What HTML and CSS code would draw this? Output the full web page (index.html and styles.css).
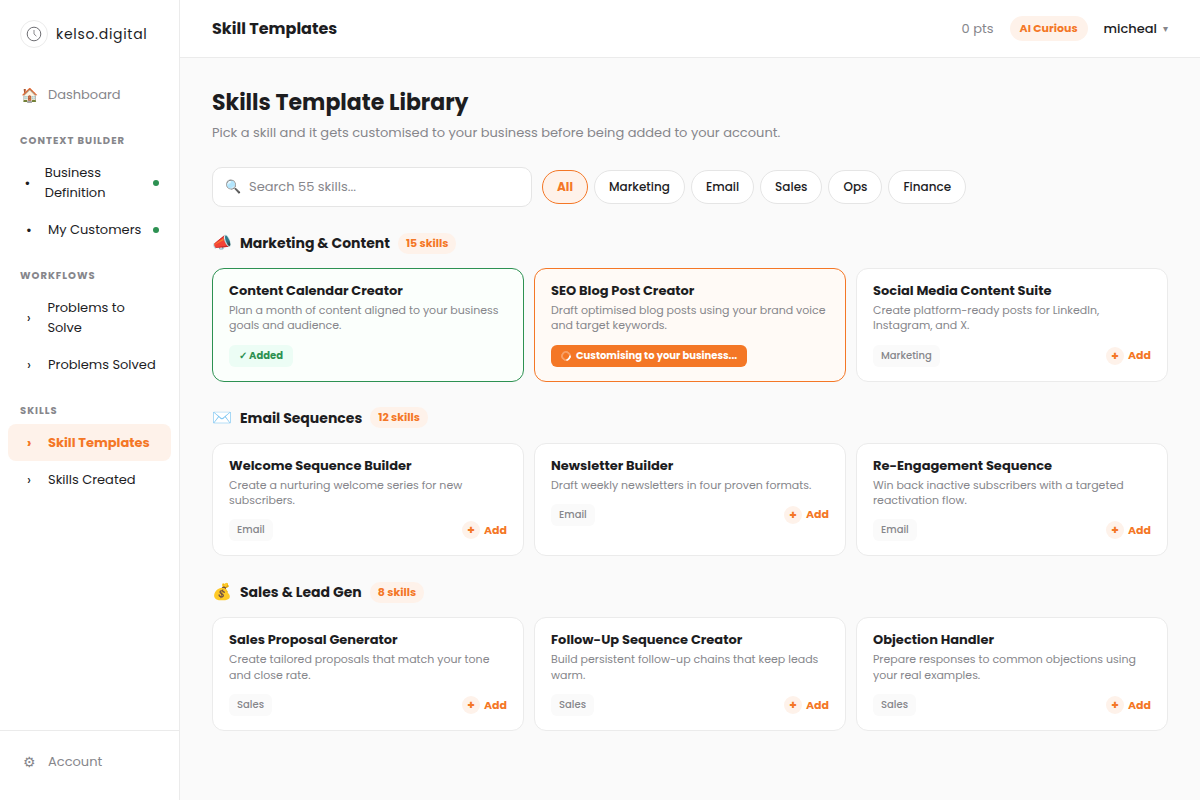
FILE: index.html
```
<!DOCTYPE html>
<html lang="en">
<head>
  <meta charset="UTF-8" />
  <meta name="viewport" content="width=device-width, initial-scale=1.0"/>
  <title>Skill Templates - kelso.digital</title>
  <link rel="stylesheet" href="styles.css">
</head>
<body>
  <aside class="sidebar">
    <a class="logo" href="#">
      <span class="logo-mark">
        <svg width="16" height="16" viewBox="0 0 16 16" fill="none" stroke="#6e6e73" stroke-width="1">
          <circle cx="8" cy="8" r="6.8"/>
          <path d="M8 4v4l2.4 2.2" stroke="#8a8a8e"/>
        </svg>
      </span>
      <span class="logo-text">kelso.digital</span>
    </a>

    <nav class="nav">
      <a class="nav-item muted" href="#"><span class="nav-icon">🏠</span><span>Dashboard</span></a>

      <h2 class="nav-label">Context Builder</h2>
      <a class="nav-item" href="#"><span class="nav-icon">•</span><span>Business Definition</span><span class="dot"></span></a>
      <a class="nav-item" href="#"><span class="nav-icon">•</span><span>My Customers</span><span class="dot"></span></a>

      <h2 class="nav-label">Workflows</h2>
      <a class="nav-item" href="#"><span class="nav-icon">›</span><span>Problems to Solve</span></a>
      <a class="nav-item" href="#"><span class="nav-icon">›</span><span>Problems Solved</span></a>

      <h2 class="nav-label">Skills</h2>
      <a class="nav-item active" href="#"><span class="nav-icon">›</span><span>Skill Templates</span></a>
      <a class="nav-item" href="#"><span class="nav-icon">›</span><span>Skills Created</span></a>
    </nav>

    <div class="sidebar-footer">
      <a class="nav-item muted" href="#"><span class="nav-icon">⚙</span><span>Account</span></a>
    </div>
  </aside>

  <div class="page">
    <header class="topbar">
      <div class="topbar-title">Skill Templates</div>
      <div class="topbar-right">
        <span class="points">0 pts</span>
        <span class="level">AI Curious</span>
        <button class="user" type="button">micheal <span class="caret">▾</span></button>
      </div>
    </header>

    <main class="content">
      <h1>Skills Template Library</h1>
      <p class="subtitle">Pick a skill and it gets customised to your business before being added to your account.</p>

      <div class="toolbar">
        <label class="search">
          <span class="search-icon">🔍</span>
          <input type="text" placeholder="Search 55 skills..." aria-label="Search skills">
        </label>
        <div class="filters">
          <button class="filter active" type="button">All</button>
          <button class="filter" type="button">Marketing</button>
          <button class="filter" type="button">Email</button>
          <button class="filter" type="button">Sales</button>
          <button class="filter" type="button">Ops</button>
          <button class="filter" type="button">Finance</button>
        </div>
      </div>

      <section class="category">
        <div class="category-header">
          <span class="category-icon">📣</span>
          <h2>Marketing &amp; Content</h2>
          <span class="count">15 skills</span>
        </div>
        <div class="cards">
          <article class="card added">
            <h3>Content Calendar Creator</h3>
            <p>Plan a month of content aligned to your business goals and audience.</p>
            <div class="card-footer"><span class="status status-added">✓ Added</span></div>
          </article>
          <article class="card loading">
            <h3>SEO Blog Post Creator</h3>
            <p>Draft optimised blog posts using your brand voice and target keywords.</p>
            <div class="card-footer"><span class="status status-loading"><span class="spinner"></span>Customising to your business...</span></div>
          </article>
          <article class="card">
            <h3>Social Media Content Suite</h3>
            <p>Create platform-ready posts for LinkedIn, Instagram, and X.</p>
            <div class="card-footer"><span class="tag">Marketing</span><button class="add" type="button"><span class="plus">+</span>Add</button></div>
          </article>
        </div>
      </section>

      <section class="category">
        <div class="category-header">
          <span class="category-icon">✉️</span>
          <h2>Email Sequences</h2>
          <span class="count">12 skills</span>
        </div>
        <div class="cards">
          <article class="card">
            <h3>Welcome Sequence Builder</h3>
            <p>Create a nurturing welcome series for new subscribers.</p>
            <div class="card-footer"><span class="tag">Email</span><button class="add" type="button"><span class="plus">+</span>Add</button></div>
          </article>
          <article class="card">
            <h3>Newsletter Builder</h3>
            <p>Draft weekly newsletters in four proven formats.</p>
            <div class="card-footer"><span class="tag">Email</span><button class="add" type="button"><span class="plus">+</span>Add</button></div>
          </article>
          <article class="card">
            <h3>Re-Engagement Sequence</h3>
            <p>Win back inactive subscribers with a targeted reactivation flow.</p>
            <div class="card-footer"><span class="tag">Email</span><button class="add" type="button"><span class="plus">+</span>Add</button></div>
          </article>
        </div>
      </section>

      <section class="category">
        <div class="category-header">
          <span class="category-icon">💰</span>
          <h2>Sales &amp; Lead Gen</h2>
          <span class="count">8 skills</span>
        </div>
        <div class="cards">
          <article class="card">
            <h3>Sales Proposal Generator</h3>
            <p>Create tailored proposals that match your tone and close rate.</p>
            <div class="card-footer"><span class="tag">Sales</span><button class="add" type="button"><span class="plus">+</span>Add</button></div>
          </article>
          <article class="card">
            <h3>Follow-Up Sequence Creator</h3>
            <p>Build persistent follow-up chains that keep leads warm.</p>
            <div class="card-footer"><span class="tag">Sales</span><button class="add" type="button"><span class="plus">+</span>Add</button></div>
          </article>
          <article class="card">
            <h3>Objection Handler</h3>
            <p>Prepare responses to common objections using your real examples.</p>
            <div class="card-footer"><span class="tag">Sales</span><button class="add" type="button"><span class="plus">+</span>Add</button></div>
          </article>
        </div>
      </section>
    </main>
  </div>
</body>
</html>
```
FILE: styles.css
```
:root {
  --orange: #f47726;
  --orange-light: #fef2ea;
  --green: #2d9152;
  --text: #1d1d1f;
  --muted: #86868b;
  --border: #ebebeb;
  --bg: #fafafa;
}

* {
  box-sizing: border-box;
  margin: 0;
  padding: 0;
}

body {
  display: flex;
  min-height: 100vh;
  font-family: Poppins, sans-serif;
  font-size: 13px;
  line-height: 20px;
  background: var(--bg);
  color: var(--text);
}

a {
  color: inherit;
  text-decoration: none;
}

button,
input {
  font-family: inherit;
  color: inherit;
}

button {
  cursor: pointer;
}

/* Sidebar */
.sidebar {
  flex: 0 0 180px;
  display: flex;
  flex-direction: column;
  background: #fff;
  border-right: 1px solid var(--border);
}

.logo {
  display: flex;
  align-items: center;
  gap: 8px;
  padding: 20px;
}

.logo-mark {
  display: flex;
  align-items: center;
  justify-content: center;
  width: 28px;
  height: 28px;
  border: 1px solid var(--border);
  border-radius: 50%;
}

.logo-text {
  font-size: 14px;
  letter-spacing: 0.05em;
}

.nav {
  flex: 1;
  padding: 8px 8px 0;
}

.nav-label {
  padding: 20px 12px 6px;
  font-size: 10px;
  font-weight: 700;
  line-height: 15px;
  letter-spacing: 1px;
  text-transform: uppercase;
  color: var(--muted);
}

.nav-item {
  display: flex;
  align-items: center;
  gap: 10px;
  padding: 9px 12px 8px;
  border-radius: 8px;
}

.nav-item.muted {
  color: var(--muted);
}

.nav-item.active {
  background: var(--orange-light);
  color: var(--orange);
  font-weight: 700;
}

.nav-icon {
  width: 18px;
  font-size: 14px;
  text-align: center;
}

.dot {
  flex-shrink: 0;
  width: 6px;
  height: 6px;
  margin-left: auto;
  border-radius: 50%;
  background: var(--green);
}

.sidebar-footer {
  padding: 12px 8px 20px;
  border-top: 1px solid var(--border);
}

/* Top bar */
.page {
  flex: 1;
  min-width: 0;
}

.topbar {
  display: flex;
  align-items: center;
  justify-content: space-between;
  padding: 16px 32px;
  background: #fff;
  border-bottom: 1px solid var(--border);
}

.topbar-title {
  font-size: 16px;
  font-weight: 700;
  line-height: 25px;
}

.topbar-right {
  display: flex;
  align-items: center;
  gap: 16px;
}

.points {
  color: var(--muted);
}

.level {
  padding: 4px 10px;
  border-radius: 20px;
  background: var(--orange-light);
  color: var(--orange);
  font-size: 11px;
  font-weight: 700;
  line-height: 17px;
}

.user {
  display: flex;
  align-items: center;
  gap: 6px;
  border: none;
  background: none;
  font-size: 13px;
  font-weight: 500;
}

.caret {
  font-size: 10px;
  color: var(--muted);
}

/* Content */
.content {
  padding: 28px 32px;
}

h1 {
  font-size: 22px;
  font-weight: 700;
  line-height: 33px;
}

.subtitle {
  margin: 4px 0 24px;
  color: var(--muted);
}

.toolbar {
  display: flex;
  align-items: center;
  gap: 10px;
}

.search {
  display: flex;
  align-items: center;
  gap: 8px;
  width: 320px;
  height: 40px;
  padding: 0 12px;
  background: #fff;
  border: 1px solid #e5e5e5;
  border-radius: 10px;
}

.search-icon {
  font-size: 13px;
}

.search input {
  flex: 1;
  min-width: 0;
  border: none;
  outline: none;
  background: none;
  font-size: 13px;
}

.search input::placeholder {
  color: var(--muted);
}

.filters {
  display: flex;
  gap: 6px;
}

.filter {
  padding: 7px 14px;
  background: #fff;
  border: 1px solid #e5e5e5;
  border-radius: 20px;
  font-size: 12px;
  font-weight: 500;
  line-height: 18px;
}

.filter.active {
  background: var(--orange-light);
  border-color: var(--orange);
  color: var(--orange);
  font-weight: 700;
}

.category {
  margin-top: 24px;
}

.category-header {
  display: flex;
  align-items: center;
  gap: 8px;
  height: 24px;
  margin-bottom: 13px;
}

.category-icon {
  font-size: 16px;
}

.category h2 {
  font-size: 14px;
  font-weight: 700;
}

.count {
  padding: 2px 8px;
  border-radius: 10px;
  background: var(--orange-light);
  color: var(--orange);
  font-size: 11px;
  font-weight: 700;
  line-height: 17px;
}

.cards {
  display: grid;
  grid-template-columns: repeat(3, 1fr);
  gap: 10px;
}

.card {
  padding: 14px 16px;
  background: #fff;
  border: 1px solid var(--border);
  border-radius: 12px;
}

.card.added {
  background: #fbfffc;
  border-color: var(--green);
}

.card.loading {
  background: #fffaf6;
  border-color: var(--orange);
}

.card h3 {
  margin-bottom: 3px;
  font-size: 13px;
  font-weight: 700;
  line-height: 1.3;
}

.card p {
  margin-bottom: 11px;
  font-size: 11px;
  line-height: 1.4;
  color: var(--muted);
}

.card-footer {
  display: flex;
  align-items: center;
  justify-content: space-between;
}

.tag,
.status {
  border-radius: 6px;
  font-size: 10px;
  line-height: 16px;
}

.tag {
  padding: 3px 8px;
  background: var(--bg);
  color: var(--muted);
  font-weight: 500;
}

.status {
  display: flex;
  align-items: center;
  gap: 5px;
  padding: 3px 10px;
  font-weight: 700;
}

.status-added {
  background: #ecfdf5;
  color: var(--green);
}

.status-loading {
  background: var(--orange);
  color: #fff;
}

.spinner {
  width: 10px;
  height: 10px;
  border: 2px solid rgba(255, 255, 255, 0.3);
  border-right-color: #fff;
  border-radius: 50%;
  transform: rotate(40deg);
}

.add {
  display: flex;
  align-items: center;
  gap: 4px;
  border: none;
  background: none;
  color: var(--orange);
  font-size: 11px;
  font-weight: 700;
}

.plus {
  width: 18px;
  height: 18px;
  border-radius: 50%;
  background: var(--orange-light);
  font-size: 12px;
  line-height: 18px;
  text-align: center;
}

@media (max-width: 900px) {
  .toolbar {
    flex-wrap: wrap;
  }

  .cards {
    grid-template-columns: 1fr;
  }
}
```
